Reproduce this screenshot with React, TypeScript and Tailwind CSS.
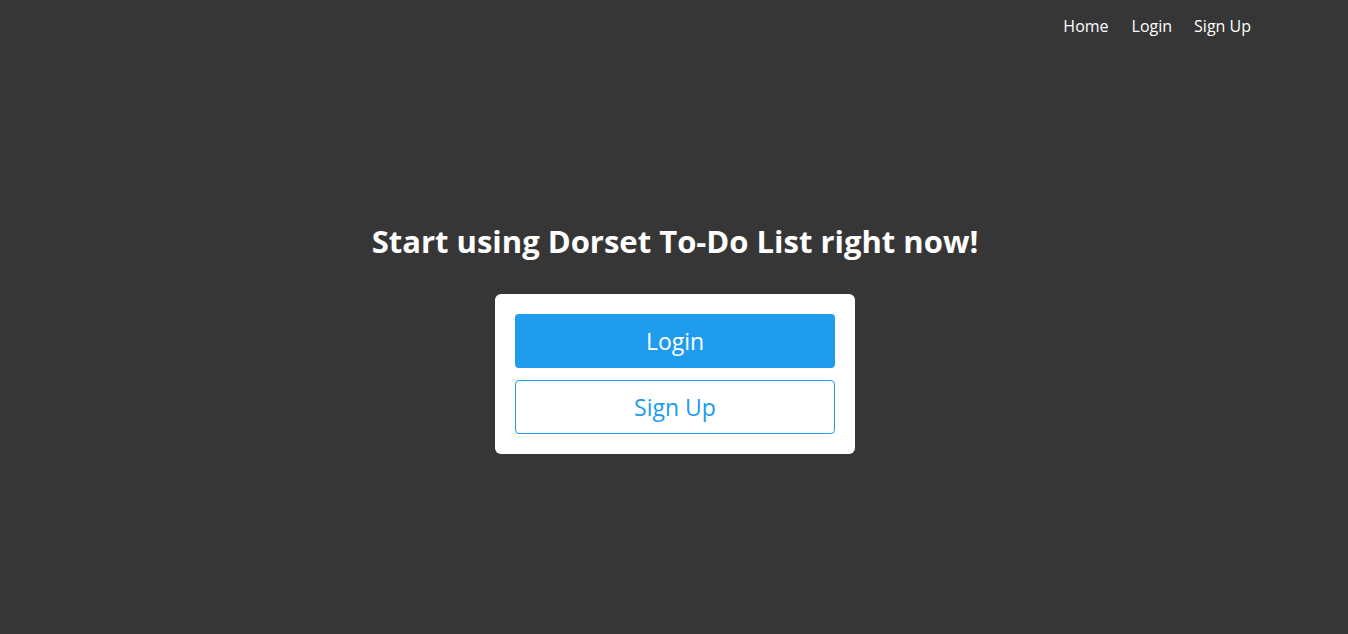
export default function App() {
  return (
    <div className="min-h-screen bg-[#363636] flex flex-col" style={{ fontFamily: '"Open Sans", "Noto Sans", sans-serif' }}>
      <nav className="h-[52px] flex items-center justify-end pr-[85px]">
        <a href="#" className="px-3 text-[16px] text-white">Home</a>
        <a href="#" className="px-[11px] text-[16px] text-white">Login</a>
        <a href="#" className="pl-[11px] pr-3 text-[16px] text-white">Sign Up</a>
      </nav>

      <div className="flex flex-col items-center pt-[168px]">
        <h1 className="text-[31px] font-bold text-white leading-[42px] ml-[2px]">Start using Dorset To-Do List right now!</h1>
        <div className="mt-[32px] ml-[2px] w-[360px] bg-white rounded-md p-5 flex flex-col gap-3">
          <button className="h-[54px] rounded bg-[#209cee] text-white text-[23px]">Login</button>
          <button className="h-[54px] rounded border border-[#209cee] bg-white text-[#209cee] text-[23px]">Sign Up</button>
        </div>
      </div>
    </div>
  );
}
